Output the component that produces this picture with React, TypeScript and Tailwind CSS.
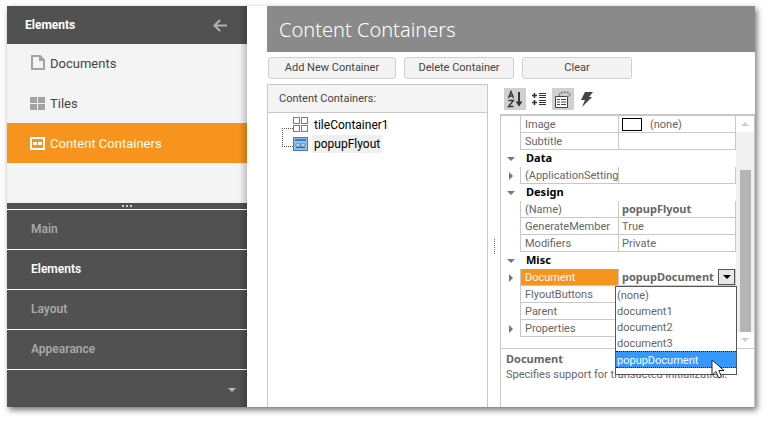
import { ReactNode } from "react";

const uiFont = "font-['Roboto',sans-serif]";
const boldFont = "font-['Noto_Sans',sans-serif] font-bold";

function DocIcon() {
  return (
    <svg width="14" height="15" viewBox="0 0 14 15" fill="none" stroke="#a3a3a3" strokeWidth="2">
      <path d="M1 1h8l4 4v9H1zM9 1v4h4" />
    </svg>
  );
}

function TilesIcon() {
  return (
    <svg width="15" height="13" viewBox="0 0 15 13" fill="#a3a3a3">
      <rect width="7" height="6" />
      <rect x="8" width="7" height="6" />
      <rect y="7" width="7" height="6" />
      <rect x="8" y="7" width="7" height="6" />
    </svg>
  );
}

function ContainerIcon() {
  return (
    <svg width="15" height="13" viewBox="0 0 15 13" fill="none">
      <rect x="1" y="1" width="13" height="11" stroke="#fff" strokeWidth="2" />
      <rect x="3" y="5" width="4" height="3" fill="#fff" />
      <rect x="8" y="5" width="4" height="3" fill="#fff" />
    </svg>
  );
}

function MenuItem({ icon, label, active, height }: { icon: ReactNode; label: string; active?: boolean; height: string }) {
  return (
    <div className={`flex items-center ${height} ${active ? "bg-[#f7941e] text-white" : "text-[#444]"}`}>
      <div className="w-[43px] flex justify-end pr-[5px]">{icon}</div>
      <span className="text-[13px] pt-[2px]">{label}</span>
    </div>
  );
}

function NavRow({ label, active }: { label: string; active?: boolean }) {
  return (
    <div className={`h-10 flex items-center pl-[24px] pb-[2px] border-t border-white text-[12px] font-semibold ${active ? "text-white" : "text-[#a8a8a8]"}`}>
      {label}
    </div>
  );
}

function Button({ label, width }: { label: string; width: string }) {
  return (
    <div className={`${width} h-[22px] flex items-center justify-center pt-px bg-[#f3f3f3] border border-[#cfcfcf] rounded-[3px] text-[11px] text-[#444]`}>
      {label}
    </div>
  );
}

function ExpandCell({ open, show }: { open?: boolean; show?: boolean }) {
  return (
    <div className="w-[19px] flex items-center justify-center shrink-0">
      {show && !open && <div className="w-0 h-0 border-y-[4px] border-y-transparent border-l-[4px] border-l-[#777]" />}
      {open && <div className="w-0 h-0 border-x-[4px] border-x-transparent border-t-[4px] border-t-[#777]" />}
    </div>
  );
}

function Category({ label }: { label: string }) {
  return (
    <div className="h-[17px] flex items-center">
      <ExpandCell open />
      <span className={`pl-[6px] text-[11px] text-black ${boldFont}`}>{label}</span>
    </div>
  );
}

function PropRow({
  name,
  value,
  bold,
  expand,
  selected,
  swatch,
}: {
  name: string;
  value?: string;
  bold?: boolean;
  expand?: boolean;
  selected?: boolean;
  swatch?: boolean;
}) {
  return (
    <div className="h-[17px] flex">
      <ExpandCell show={expand} />
      <div
        className={`w-[98px] shrink-0 overflow-hidden whitespace-nowrap pl-[4px] pt-px text-[11px] leading-[16px] border-b border-l border-[#c8c8c8] ${
          selected ? "bg-[#f7941e] text-white" : "text-[#666]"
        }`}
      >
        {name}
      </div>
      <div
        className={`flex-1 flex items-center pl-[3px] text-[11px] leading-[16px] border-b border-l border-r border-[#c8c8c8] text-[#666] ${
          bold ? boldFont : ""
        }`}
      >
        {swatch && <div className="w-5 h-[13px] border border-black bg-white mr-2" />}
        <span className={bold ? "" : "pt-[2px]"}>{value}</span>
      </div>
    </div>
  );
}

function SortAzIcon() {
  return (
    <svg width="16" height="18" viewBox="0 0 16 18" fill="none">
      <path d="M1.500 8 4 1.500 6.500 8M2.500 6h3M1.500 10.500h5l-5 6h5" stroke="#333" strokeWidth="1.300" />
      <path d="M12 2v11" stroke="#333" strokeWidth="2" />
      <path d="M8.500 11.500h7L12 16.500z" fill="#333" />
    </svg>
  );
}

function CategorizedIcon() {
  return (
    <svg width="16" height="14" viewBox="0 0 16 14" fill="none" stroke="#333">
      <path d="M1 3.500h5M3.500 1v5M1 10.500h5M3.500 8v5" strokeWidth="1.600" />
      <path d="M8 1.500h7M8 3.500h7M8 5.500h7M8 8.500h7M8 10.500h7M8 12.500h7" strokeWidth="1" />
    </svg>
  );
}

function PropertiesIcon() {
  return (
    <svg width="18" height="17" viewBox="0 0 18 17" fill="none" stroke="#444">
      <path d="M1.500 5.500h12v11h-12z" fill="#fff" />
      <path d="M3 8.500h3M7 8.500h5M3 11h3M7 11h5M3 13.500h3M7 13.500h5" />
      <path d="M5 4.500c1-3 5-4 9-3l2 2-3 3" stroke="#777" strokeWidth="1.500" strokeDasharray="2 1" />
    </svg>
  );
}

function BoltIcon() {
  return (
    <svg width="12" height="15" viewBox="0 0 12 15" fill="#444">
      <path d="M4 0h8L8 5h3L1 15l3-7H0z" />
    </svg>
  );
}

function FlyoutIcon() {
  return (
    <svg width="15" height="14" viewBox="0 0 15 14">
      <rect x="0.500" y="0.500" width="14" height="13" fill="#8fbfe8" stroke="#3f7fc0" />
      <rect x="2" y="2" width="11" height="2" fill="#3f7fc0" />
      <rect x="3" y="7" width="4" height="2" fill="#fff" stroke="#2f5f90" strokeWidth="0.600" />
      <rect x="8" y="7" width="4" height="2" fill="#fff" stroke="#2f5f90" strokeWidth="0.600" />
      <rect x="3" y="10" width="9" height="1" fill="#2f5f90" />
    </svg>
  );
}

function TileContainerIcon() {
  return (
    <svg width="15" height="15" viewBox="0 0 15 15" fill="#fff" stroke="#6f7f9f">
      <rect x="0.500" y="0.500" width="6" height="6" />
      <rect x="8.500" y="0.500" width="6" height="6" />
      <rect x="0.500" y="8.500" width="6" height="6" />
      <rect x="8.500" y="8.500" width="6" height="6" />
    </svg>
  );
}

function Cursor() {
  return (
    <svg className="absolute left-[711px] top-[359px]" width="14" height="21" viewBox="0 0 14 21">
      <path d="M1 1v15l4-3.500 2.500 6.500 3-1.300-2.700-6.200H13z" fill="#fff" stroke="#222" strokeWidth="1" />
    </svg>
  );
}

export default function App() {
  return (
    <div className={`relative w-[768px] h-[422px] bg-white pl-[7px] pt-[6px] overflow-hidden ${uiFont}`}>
      <div className="flex w-[748px] h-[401px] bg-white shadow-[2px_3px_6px_rgba(0,0,0,0.55)]">
        {/* left navigation */}
        <div className="relative w-[240px] shrink-0 flex flex-col bg-[#f4f4f4]">
          <div className="h-[38px] bg-[#515151] flex items-center justify-between pl-[18px] pr-[20px]">
            <span className="text-[12px] font-bold text-white">Elements</span>
            <svg width="14" height="13" viewBox="0 0 14 13" fill="none" stroke="#b0b0b0" strokeWidth="2">
              <path d="M14 6.500H2M7 1 1.500 6.500 7 12" />
            </svg>
          </div>
          <MenuItem icon={<DocIcon />} label="Documents" height="h-[39px] pb-[2px]" />
          <MenuItem icon={<TilesIcon />} label="Tiles" height="h-10" />
          <MenuItem icon={<ContainerIcon />} label="Content Containers" active height="h-10" />
          <div className="flex-1" />
          <div className="h-[6px] bg-[#515151] flex items-center justify-center gap-[2px]">
            <div className="w-[2px] h-[2px] bg-[#ccc]" />
            <div className="w-[2px] h-[2px] bg-[#ccc]" />
            <div className="w-[2px] h-[2px] bg-[#ccc]" />
          </div>
          <div className="bg-[#515151]">
            <NavRow label="Main" />
            <NavRow label="Elements" active />
            <NavRow label="Layout" />
            <NavRow label="Appearance" />
            <div className="h-[38px] border-t border-white flex items-center justify-end pr-[11px] pt-[2px]">
              <div className="w-0 h-0 border-x-[4px] border-x-transparent border-t-[4px] border-t-[#bbb]" />
            </div>
          </div>
          <div className="absolute top-0 right-0 bottom-0 w-2 bg-gradient-to-r from-transparent to-black/20" />
        </div>

        {/* right content */}
        <div className="flex-1 flex flex-col pl-5 min-w-0">
          <div className="h-[46px] shrink-0 bg-[#8a8a8a] flex items-center pl-3 pt-[2px] font-['Noto_Sans',sans-serif] font-light text-[20px] text-white">
            Content Containers
          </div>
          <div className="flex gap-2 mt-[5px] pl-px">
            <Button label="Add New Container" width="w-[128px]" />
            <Button label="Delete Container" width="w-[110px]" />
            <Button label="Clear" width="w-[110px]" />
          </div>
          <div className="flex-1 flex mt-[5px] min-h-0">
            {/* containers list */}
            <div className="w-[221px] shrink-0 flex flex-col border-x border-t border-[#c8c8c8]">
              <div className="h-[28px] shrink-0 flex items-center pl-[11px] pt-[2px] bg-[#f4f4f4] border-b border-[#c8c8c8] text-[11px] text-[#444]">
                Content Containers:
              </div>
              <div className="relative pl-[25px] pt-[4px] flex flex-col gap-[3px] text-[12px] text-black">
                <div className="absolute left-[14px] top-[15px] w-[11px] h-[19px] border-l border-t border-b border-dotted border-[#555]" />
                <div className="flex items-center gap-[6px] h-[15px]">
                  <TileContainerIcon />
                  <span>tileContainer1</span>
                </div>
                <div className="flex items-center gap-[4px] h-[17px]">
                  <FlyoutIcon />
                  <span className="bg-[#efefef] px-[2px] h-[18px] leading-[18px]">popupFlyout</span>
                </div>
              </div>
            </div>

            {/* splitter */}
            <div className="w-3 shrink-0 flex items-center justify-center pt-[1px]">
              <div className="h-[15px] border-l border-dotted border-[#666]" />
            </div>

            {/* property grid */}
            <div className="flex-1 flex flex-col min-w-0">
              <div className="h-[30px] shrink-0 flex items-center pl-[4px] gap-[4px]">
                <div className="w-[22px] h-[22px] bg-[#d0d0d0] flex items-center justify-center">
                  <SortAzIcon />
                </div>
                <div className="w-[18px] flex justify-center">
                  <CategorizedIcon />
                </div>
                <div className="w-[22px] h-[22px] bg-[#d0d0d0] flex items-center justify-center">
                  <PropertiesIcon />
                </div>
                <div className="w-[18px] flex justify-center">
                  <BoltIcon />
                </div>
              </div>
              <div className="flex-1 flex flex-col border-x border-t-2 border-[#c8c8c8]">
                <div className="h-[233px] shrink-0 flex border-b border-[#c8c8c8]">
                  <div className="flex-1 min-w-0">
                    <PropRow name="Image" value="(none)" swatch />
                    <PropRow name="Subtitle" />
                    <Category label="Data" />
                    <PropRow name="(ApplicationSettings)" expand />
                    <Category label="Design" />
                    <PropRow name="(Name)" value="popupFlyout" bold />
                    <PropRow name="GenerateMember" value="True" />
                    <PropRow name="Modifiers" value="Private" />
                    <Category label="Misc" />
                    <div className="relative">
                      <PropRow name="Document" value="popupDocument" bold expand selected />
                      <div className="absolute right-[1px] top-0 w-[17px] h-[16px] bg-[#e8e8e8] border border-[#555] flex items-center justify-center">
                        <div className="w-0 h-0 border-x-[4px] border-x-transparent border-t-[4px] border-t-black" />
                      </div>
                    </div>
                    <PropRow name="FlyoutButtons" />
                    <PropRow name="Parent" />
                    <PropRow name="Properties" expand />
                  </div>
                  <div className="w-[18px] shrink-0 flex flex-col items-center bg-[#f0f0f0]">
                    <div className="h-4 w-full bg-white flex items-center justify-center">
                      <div className="w-0 h-0 border-x-[4px] border-x-transparent border-b-[4px] border-b-[#ccc]" />
                    </div>
                    <div className="h-[38px]" />
                    <div className="w-[11px] h-[162px] bg-[#b5b5b5]" />
                    <div className="flex-1 w-full bg-white flex items-center justify-center">
                      <div className="w-0 h-0 border-x-[4px] border-x-transparent border-t-[4px] border-t-[#ccc]" />
                    </div>
                  </div>
                </div>
                <div className="px-[5px] pt-[2px] text-[11px] leading-[16px] text-[#666]">
                  <div className={boldFont}>Document</div>
                  <div className="whitespace-nowrap">Specifies support for transacted initialization.</div>
                </div>
              </div>
            </div>
          </div>
        </div>
      </div>

      {/* open dropdown */}
      <div className="absolute left-[615px] top-[286px] w-[122px] h-[89px] bg-white border border-[#555] text-[11px] leading-[18px] text-[#666]">
        <div className="h-4 pl-px">(none)</div>
        <div className="h-4 pl-px">document1</div>
        <div className="h-4 pl-px">document2</div>
        <div className="h-4 pl-px">document3</div>
        <div className="h-[17px] pl-px bg-[#3399ff] text-white border-y border-dotted border-[#123]">popupDocument</div>
      </div>
      <Cursor />
    </div>
  );
}
